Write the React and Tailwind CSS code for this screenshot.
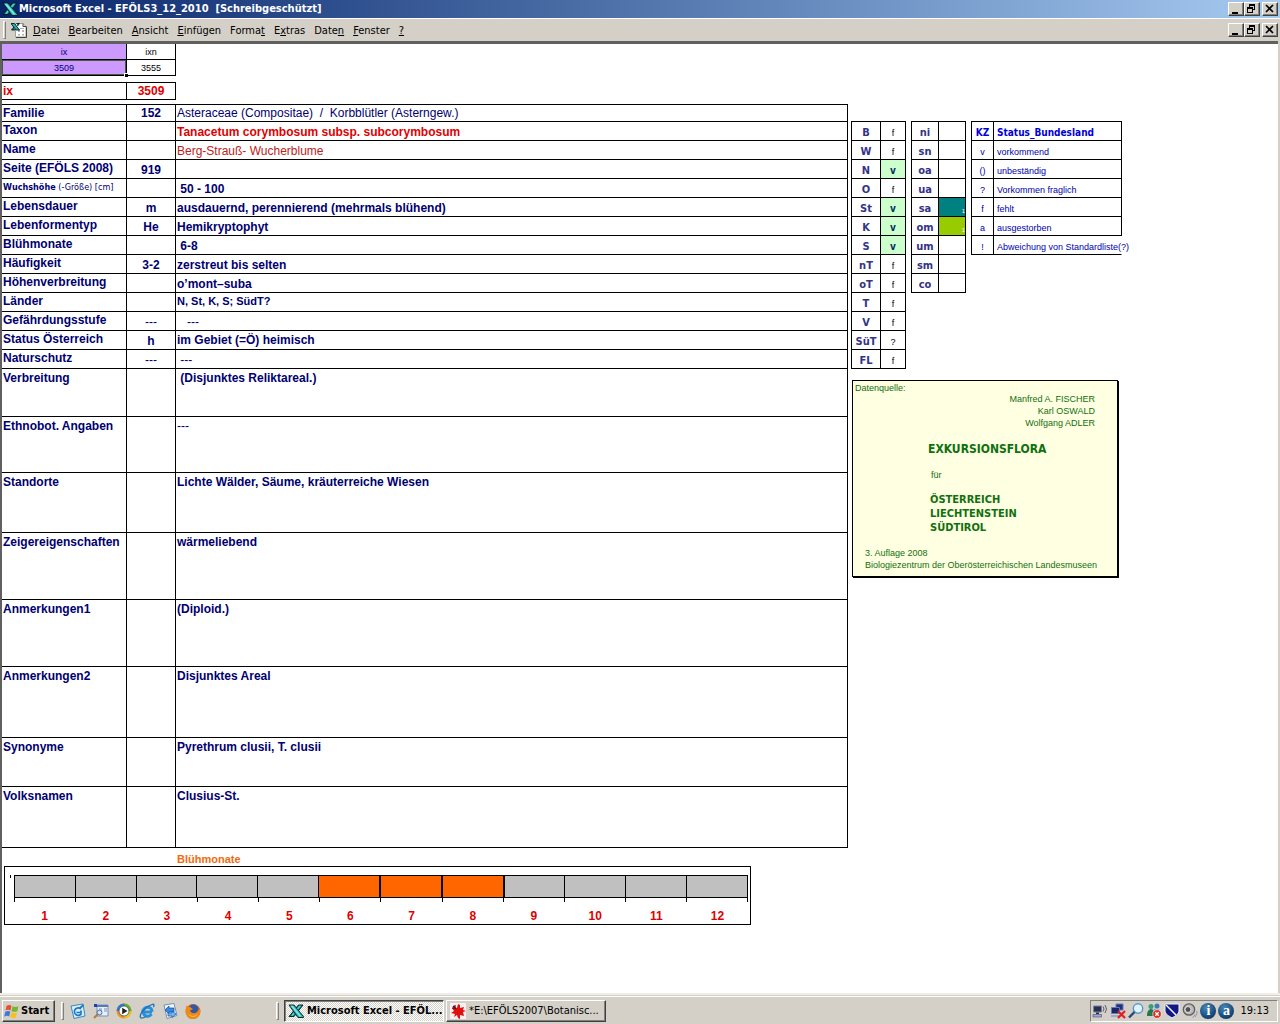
import { useState } from 'react';
import clsx from 'clsx';

const rows = [
  { label: 'Familie', code: '152', value: 'Asteraceae (Compositae)  /  Korbblütler (Asterngew.)', size: 'h-[17px]', text: 'font-normal' },
  { label: 'Taxon', value: 'Tanacetum corymbosum subsp. subcorymbosum', text: 'text-[#e00000]' },
  { label: 'Name', value: 'Berg-Strauß- Wucherblume', text: 'font-normal text-[#c02020]' },
  { label: 'Seite (EFÖLS 2008)', code: '919', value: '' },
  { label: 'Wuchshöhe', unit: '(-Größe) [cm]', value: ' 50 - 100' },
  { label: 'Lebensdauer', code: 'm', value: 'ausdauernd, perennierend (mehrmals blühend)' },
  { label: 'Lebenformentyp', code: 'He', value: 'Hemikryptophyt' },
  { label: 'Blühmonate', value: ' 6-8' },
  { label: 'Häufigkeit', code: '3-2', value: 'zerstreut bis selten' },
  { label: 'Höhenverbreitung', value: 'o’mont–suba' },
  { label: 'Länder', value: 'N, St, K, S; SüdT?', text: 'align-top text-[11px]' },
  { label: 'Gefährdungsstufe', code: '---', value: '   ---', text: 'font-normal' },
  { label: 'Status Österreich', code: 'h', value: 'im Gebiet (=Ö) heimisch', text: 'align-middle' },
  { label: 'Naturschutz', code: '---', value: ' ---', text: 'font-normal' },
  { label: 'Verbreitung', value: ' (Disjunktes Reliktareal.)', size: 'h-[48px]', tall: true },
  { label: 'Ethnobot. Angaben', value: '---', size: 'h-[56px]', tall: true, text: 'font-normal' },
  { label: 'Standorte', value: 'Lichte Wälder, Säume, kräuterreiche Wiesen', size: 'h-[60px]', tall: true },
  { label: 'Zeigereigenschaften', value: 'wärmeliebend', size: 'h-[67px]', tall: true },
  { label: 'Anmerkungen1', value: '(Diploid.)', size: 'h-[67px]', tall: true },
  { label: 'Anmerkungen2', value: 'Disjunktes Areal', size: 'h-[71px]', tall: true },
  { label: 'Synonyme', value: 'Pyrethrum clusii, T. clusii', size: 'h-[49px]', tall: true },
  { label: 'Volksnamen', value: 'Clusius-St.', size: 'h-[61px]', tall: true },
];

const laender = [
  ['B', 'f'], ['W', 'f'], ['N', 'v'], ['O', 'f'], ['St', 'v'], ['K', 'v'], ['S', 'v'],
  ['nT', 'f'], ['oT', 'f'], ['T', 'f'], ['V', 'f'], ['SüT', '?'], ['FL', 'f'],
];

const stufen = [
  ['ni', ''], ['sn', ''], ['oa', ''], ['ua', ''], ['sa', 'bg-[#008080]'],
  ['om', 'bg-[#99cc00]'], ['um', ''], ['sm', ''], ['co', ''],
];

const status = [
  ['v', 'vorkommend'],
  ['()', 'unbeständig'],
  ['?', 'Vorkommen fraglich'],
  ['f', 'fehlt'],
  ['a', 'ausgestorben'],
  ['!', 'Abweichung von Standardliste(?)'],
];

const menus = [
  ['', 'D', 'atei'], ['', 'B', 'earbeiten'], ['', 'A', 'nsicht'], ['', 'E', 'infügen'], ['Forma', 't', ''],
  ['E', 'x', 'tras'], ['Date', 'n', ''], ['', 'F', 'enster'], ['', '?', ''],
];

const months = [1, 2, 3, 4, 5, 6, 7, 8, 9, 10, 11, 12];

const raised = 'bg-[#d4d0c8] border border-t-white border-l-white border-r-[#404040] border-b-[#404040] shadow-[inset_-1px_-1px_0_#808080]';
const cell = 'border-r border-b border-black p-0 leading-4';
const smallCell = 'border-r border-b border-black p-0 leading-[14px]';
const grid = 'table-fixed border-separate border-spacing-0 border-t border-l border-black';
const tahoma = "font-['DejaVu_Sans_Condensed','DejaVu_Sans',sans-serif]";

const ExcelIcon = ({ className }) => (
  <svg viewBox="0 0 16 16" className={className} aria-hidden="true">
    <path d="M10.500 2h4.500L6 13.500H1z" fill="#107878" stroke="#001818" strokeWidth=".9" />
    <path d="M1 2h5l9.500 11.500v1H10z" fill="#28b0b0" stroke="#001818" strokeWidth=".9" />
    <path d="M2.500 2.800h2.300l8.700 10.700h-2z" fill="#80e8e8" />
    <path d="M11.200 2.800h2L10 6.500 9 5.600zM5.500 9.500l1 1.200-1.500 2H3z" fill="#58d0d0" />
  </svg>
);

const SheetIcon = () => (
  <svg viewBox="0 0 16 16" className="h-4 w-4" aria-hidden="true">
    <path d="M4.500 1.500h7.500l3 3v10.500H4.500z" fill="#fff" stroke="#a0a0a0" />
    <path d="M12 1.500v3h3M15.500 4.500v11H5" fill="none" stroke="#404040" />
    <path d="M7 8h2v2H7zM11 8h2v2h-2zM7 12h2v1.500H7zM11 12h2v1.500h-2zM9 6h4v1H9z" fill="#b0b0b0" />
    <path d="M0 1.500h3.500l5 6.500H5z" fill="#28b0b0" stroke="#001818" strokeWidth=".9" />
    <path d="M5.500 1.500h3l-2 2.500M3 5L.5 8H4" fill="#107878" stroke="#001818" strokeWidth=".9" />
  </svg>
);

const WindowButtons = () => (
  <div className="flex items-center pr-[2px]">
    <button aria-label="Minimieren" className={clsx(raised, 'h-[14px] w-4')}>
      <svg viewBox="0 0 14 12" className="h-3 w-[14px]"><path d="M3 9h6v2H3z" /></svg>
    </button>
    <button aria-label="Wiederherstellen" className={clsx(raised, 'h-[14px] w-4')}>
      <svg viewBox="0 0 14 12" className="h-3 w-[14px]" fill="none" stroke="#000" shapeRendering="crispEdges">
        <path d="M4.500 4V1.500h5v5H8M4 2h6M2.500 4.500h5v5h-5zM2 5h6" />
      </svg>
    </button>
    <button aria-label="Schließen" className={clsx(raised, 'ml-[2px] h-[14px] w-4')}>
      <svg viewBox="0 0 14 12" className="h-3 w-[14px]"><path d="M3 2l7 7M10 2L3 9" stroke="#000" strokeWidth="1.700" /></svg>
    </button>
  </div>
);

const TitleBar = () => (
  <header className="flex h-[18px] items-center bg-linear-to-r from-[#0a246a] to-[#a6caf0] pl-[2px]">
    <ExcelIcon className="mr-px h-4 w-4" />
    <h1 className="flex-1 whitespace-pre text-[11px] font-bold leading-4 text-white">
      {'Microsoft Excel - EFÖLS3_12_2010  [Schreibgeschützt]'}
    </h1>
    <WindowButtons />
  </header>
);

const MenuBar = () => (
  <div className="flex h-[23px] items-center border-t border-white bg-[#d4d0c8] pl-[3px]">
    <Handle />
    <span className="mr-[6px] ml-[5px]"><SheetIcon /></span>
    <nav className="flex flex-1 gap-[9px] pt-[2px]">
      {menus.map(([before, key, after]) => (
        <button key={before + key + after} className="text-[11px] leading-4">
          {before}<u>{key}</u>{after}
        </button>
      ))}
    </nav>
    <WindowButtons />
  </div>
);

const IndexTables = ({ index }) => (
  <>
    <table className="w-[174px] table-fixed border-separate border-spacing-0 text-center text-[9px]">
      <thead>
        <tr>
          <th className={clsx(cell, 'h-4 w-[125px] bg-[#cc99ff] font-normal text-[#000080]')}><div className="h-[15px]">ix</div></th>
          <th className={clsx(cell, 'h-4 w-[49px] font-normal')}><div className="h-[15px]">ixn</div></th>
        </tr>
      </thead>
      <tbody>
        <tr>
          <td className={clsx(cell, 'relative h-4 bg-[#cc99ff] text-[#000080] shadow-[inset_0_0_0_1px_#4a5a3a]')}>
            <div className="h-[15px]">{index}</div>
            <span className="absolute -right-[2px] -bottom-[2px] h-1 w-1 border-t border-l border-white bg-black" />
          </td>
          <td className={clsx(cell, 'h-4')}><div className="h-[15px]">3555</div></td>
        </tr>
      </tbody>
    </table>
    <table className="mt-[6px] w-[174px] table-fixed border-separate border-spacing-0 border-t border-black text-[12px] font-bold text-[#e00000]">
      <tbody>
        <tr>
          <th scope="row" className={clsx(cell, 'h-[17px] w-[125px] pl-px text-left')}>ix</th>
          <td className={clsx(cell, 'h-[17px] w-[49px] text-center')}>{index}</td>
        </tr>
      </tbody>
    </table>
  </>
);

const SpeciesTable = () => (
  <table className="mt-1 w-full table-fixed border-separate border-spacing-0 border-t border-black text-[12px] font-bold text-[#000070]">
    <colgroup>
      <col className="w-[125px]" />
      <col className="w-[49px]" />
      <col />
    </colgroup>
    <tbody>
      {rows.map((row) => (
        <tr key={row.label}>
          <th scope="row" className={clsx(cell, row.size || 'h-[19px]', 'pl-px text-left align-top whitespace-nowrap', row.tall && 'pt-px', row.unit && [tahoma, 'text-[9px]'])}>
            {row.label}
            {row.unit && <span className="text-[9px] font-normal"> {row.unit}</span>}
          </th>
          <td className={clsx(cell, 'text-center align-bottom', row.code === '---' && 'font-normal')}>{row.code}</td>
          <td className={clsx(cell, 'pl-px whitespace-pre', row.tall ? 'pt-px align-top' : !row.text?.includes('align') && 'align-bottom', row.text)}>
            {row.value}
          </td>
        </tr>
      ))}
    </tbody>
  </table>
);

const MonthChart = () => (
  <figure className="mr-[97px] ml-[2px]">
    <figcaption className="pt-1 pl-[173px] text-[11px] leading-[14px] font-bold text-[#f06a10]">Blühmonate</figcaption>
    <div className="border border-black px-[2px] pt-2">
      <div className="flex">
        <span className="mr-[3px] ml-[3px] h-[3px] w-px bg-black" />
        <div className="flex h-[23px] flex-1 border border-r-0 border-black">
          {months.map((m) => (
            <div
              key={m}
              className={clsx('flex-1 border-black', m > 5 && m < 9 ? 'border-r-2 bg-[#ff6600]' : 'border-r bg-[#c0c0c0]')}
            />
          ))}
        </div>
      </div>
      <div className="ml-[7px] flex h-1 border-r border-black">
        {months.map((m) => <div key={m} className="flex-1 border-l border-black" />)}
      </div>
      <div className="ml-[7px] flex pt-[6px] text-center text-[12px] leading-4 font-bold text-[#e00000]">
        {months.map((m) => <div key={m} className="flex-1">{m}</div>)}
      </div>
    </div>
  </figure>
);

const LaenderTable = () => (
  <table className={clsx(grid, 'w-[55px] text-center')}>
    <tbody>
      {laender.map(([name, state]) => (
        <tr key={name}>
          <th scope="row" className={clsx(smallCell, tahoma, 'h-[19px] w-[29px] align-bottom text-[11px] font-bold text-[#333388]')}>{name}</th>
          <td className={clsx(smallCell, 'w-[25px] align-bottom', state === 'v' ? [tahoma, 'bg-[#ccffcc] text-[10px] font-bold text-[#003060]'] : 'text-[9px]')}>{state}</td>
        </tr>
      ))}
    </tbody>
  </table>
);

const StufenTable = () => (
  <table className={clsx(grid, 'w-[55px] text-center')}>
    <tbody>
      {stufen.map(([name, color]) => (
        <tr key={name}>
          <th scope="row" className={clsx(smallCell, tahoma, 'h-[19px] w-[27px] align-bottom text-[11px] font-bold text-[#333388]')}>{name}</th>
          <td className={clsx(smallCell, 'w-[27px] text-right align-bottom', color)}>
            {color && <span className="block text-[6px] leading-[10px] text-white">1</span>}
          </td>
        </tr>
      ))}
    </tbody>
  </table>
);

const StatusTable = () => (
  <table className={clsx(grid, 'w-[151px] text-[9px] text-[#0000b0]')}>
    <thead>
      <tr className={clsx(tahoma, 'text-[10px] text-[#0000dd]')}>
        <th className={clsx(smallCell, 'h-[19px] w-[22px] align-bottom')}>KZ</th>
        <th className={clsx(smallCell, 'pl-[3px] text-left align-bottom')}>Status_Bundesland</th>
      </tr>
    </thead>
    <tbody>
      {status.map(([key, text]) => (
        <tr key={key}>
          <td className={clsx(smallCell, 'h-[19px] text-center align-bottom')}>{key}</td>
          <td className={clsx(smallCell, 'pl-[3px] align-bottom whitespace-nowrap', key === '!' && 'border-r-transparent')}>{text}</td>
        </tr>
      ))}
    </tbody>
  </table>
);

const SourceBox = () => (
  <section className="mt-[11px] ml-px w-[266px] border border-black bg-[#ffffe1] text-[9px] leading-3 text-[#107010] shadow-[1px_1px_0_#000]">
    <p className="pt-px pl-[2px]">Datenquelle:</p>
    <p className="-mt-px pr-[22px] text-right">Manfred A. FISCHER<br />Karl OSWALD<br />Wolfgang ADLER</p>
    <h2 className={clsx(tahoma, 'pt-3 pl-[75px] text-[12px] leading-4 font-bold')}>EXKURSIONSFLORA</h2>
    <p className="pt-3 pl-[78px]">für</p>
    <p className={clsx(tahoma, 'pt-3 pl-[77px] text-[11px] leading-[14px] font-bold')}>ÖSTERREICH<br />LIECHTENSTEIN<br />SÜDTIROL</p>
    <p className="pt-3 pb-[5px] pl-3">3. Auflage 2008<br />Biologiezentrum der Oberösterreichischen Landesmuseen</p>
  </section>
);

const StartFlag = () => (
  <svg viewBox="0 0 16 16" className="h-4 w-4" aria-hidden="true">
    <path d="M2.500 3c2-1.500 3.500-1.200 5-.3L6.500 7.500C5 6.600 3.500 6.400 1.500 7.500z" fill="#e8502a" />
    <path d="M8.500 3.200c1.800 1 3.600 1 6 0l-1.200 5c-2 .9-4 .9-5.800-.2z" fill="#70b82c" />
    <path d="M1.300 8.700c2-1.100 3.500-1 5-.1L5.200 13.500c-1.500-.9-3-1-5 .2z" fill="#3a78e0" />
    <path d="M7.300 9.200c1.800 1 3.700 1 5.700.2l-1.200 5c-2 .9-3.800.7-5.600-.3z" fill="#f8c020" />
  </svg>
);

const quickIcons = [
  ['Outlook Express', (
    <>
      <path d="M1 3l12-2 2 12-11 2.500z" fill="#d8ecfa" stroke="#3a88c0" />
      <path d="M11 6A3.800 3.800 0 1 0 11.500 10.500M6.500 9.500h4.500V7.500M10 5l3.500-3" fill="none" stroke="#1878c0" strokeWidth="1.700" />
    </>
  )],
  ['Suche', (
    <>
      <path d="M4 2h11v11H4z" fill="#e8f0fa" stroke="#7890b8" />
      <path d="M4 2h11v2H4z" fill="#5878b8" />
      <path d="M6 6h3M11 6h3M6 8h3M11 8h3" stroke="#7090c8" />
      <circle cx="6.500" cy="9.500" r="2.500" fill="#c8e4fa" stroke="#5070a0" />
      <path d="M5 11l-4 4" stroke="#b87838" strokeWidth="2" />
      <path d="M1 1h3v3H1z" fill="#1840c0" />
    </>
  )],
  ['Media Player', (
    <>
      <circle cx="8" cy="8" r="7.500" fill="#f09020" />
      <path d="M8 .5A7.500 7.500 0 0 1 15.500 8H8z" fill="#58b030" />
      <path d="M.5 8A7.500 7.500 0 0 1 8 .5V8z" fill="#3078d0" />
      <path d="M8 15.500A7.500 7.500 0 0 0 15.500 8H8z" fill="#f0c020" />
      <circle cx="8" cy="8" r="5" fill="#fff" stroke="#405060" strokeWidth=".8" />
      <path d="M6.200 4.800v6.400L11.500 8z" fill="#202020" />
    </>
  )],
  ['Internet Explorer', (
    <>
      <path d="M13 9H4.500c0 5 5.500 5.500 8 2.200M3.800 9c0-6 9.500-6.500 9.200-.3" fill="none" stroke="#2890d8" strokeWidth="3" />
      <path d="M1.500 14.500C0 11 7 3 14.500 1.200c1 1 .5 2-.2 3M1.500 14.500c1 1.200 3 .3 5-.8" fill="none" stroke="#2070b8" strokeWidth="1.300" />
    </>
  )],
  ['Synchronisieren', (
    <>
      <path d="M2 2l10-1.500 3 12L5 15.500z" fill="#f0f6fc" stroke="#7090b8" />
      <path d="M3 7l4-4v2h5v4H7v2z" fill="#3888e0" stroke="#185098" strokeWidth=".7" />
      <path d="M14 11l-4 3.500V13H6v-3h4V8z" fill="#70b8f0" stroke="#185098" strokeWidth=".7" />
    </>
  )],
  ['Firefox', (
    <>
      <circle cx="8" cy="8.500" r="7.500" fill="#e06810" />
      <circle cx="8.500" cy="6.500" r="5" fill="#3058a8" />
      <path d="M1.500 2.500c1 1.500 2 1.500 3.500 1.500l3 2-3 1.500c1 3 4.500 3.500 7 1.500l2.500-3.500c2 5-1 10.500-7 10.500S-.5 10 1.500 2.500z" fill="#f08818" />
      <path d="M3 10c2 3.500 6.500 4 9.500 1-1 3.500-7.500 4.500-9.500-1z" fill="#f8c840" />
    </>
  )],
];

const trayIcons = [
  ['Netzwerk', (
    <>
      <path d="M1.500 3h8v6h-8z" fill="#283050" stroke="#7880a8" />
      <path d="M4 9.500h3V11H4z" fill="#283050" />
      <path d="M1 11.500h8.500V14H1z" fill="#a0a8d0" stroke="#404878" strokeWidth=".6" />
      <path d="M11 3.500q2 2.500 0 5M13 2q3 4 0 8" fill="none" stroke="#606068" />
    </>
  )],
  ['LAN getrennt', (
    <>
      <path d="M6 1h7v6H6z" fill="#203080" stroke="#6878b8" />
      <path d="M1.500 4.500h8v6h-8z" fill="#182868" stroke="#6878b8" />
      <path d="M1 12h9v2H1z" fill="#a0a8c8" />
      <path d="M8 8l7 7M15 8l-7 7" stroke="#e02020" strokeWidth="2.200" />
    </>
  )],
  ['Lupe', (
    <>
      <circle cx="10" cy="5.500" r="4.700" fill="#e0f4ff" stroke="#5098d0" strokeWidth="1.400" />
      <path d="M6.500 9L1 14.500" stroke="#284878" strokeWidth="2.400" />
    </>
  )],
  ['Messenger', (
    <>
      <circle cx="5" cy="3.500" r="2.500" fill="#38a078" />
      <path d="M1 13c0-5 2-7 4-7s4.500 3 4.500 7z" fill="#207850" />
      <circle cx="11" cy="3" r="2.500" fill="#4078b8" />
      <path d="M7 9c0-3 2-3.500 4-3.500S14.500 7 14.500 10z" fill="#68a8d0" />
      <circle cx="11" cy="11" r="4.300" fill="#d83020" stroke="#fff" strokeWidth=".6" />
      <path d="M9.300 9.300l3.400 3.400M12.700 9.300l-3.400 3.400" stroke="#fff" strokeWidth="1.300" />
    </>
  )],
  ['Virenschutz', (
    <>
      <path d="M1 1h14v7c0 3-4 5-7 7-3-2-7-4-7-7z" fill="#101888" stroke="#f0f0f8" />
      <path d="M2 2l10 10" stroke="#fff" strokeWidth="1.400" />
    </>
  )],
  ['Lautstärke', (
    <>
      <circle cx="7" cy="6.500" r="5.700" fill="#b8b8b8" stroke="#606060" strokeWidth="1.300" />
      <circle cx="6" cy="6.500" r="3" fill="#505050" stroke="#e8e8e8" />
      <path d="M13 14q2.500-2.500 2-6M10.500 14.500q2-1 2.500-3" fill="none" stroke="#9090c0" />
    </>
  )],
];

const BlueBall = ({ letter }) => (
  <span className="flex h-4 w-4 items-center justify-center rounded-full bg-[radial-gradient(circle_at_40%_30%,#4a88b8,#0c3c6c_75%)] font-['Liberation_Serif',serif] text-[14px] leading-none font-bold text-white">
    {letter}
  </span>
);

const Splat = () => (
  <svg viewBox="0 0 16 16" className="h-4 w-4 shrink-0" aria-hidden="true">
    <path d="M0 0h16v16H0z" fill="#f8f0f0" />
    <path d="M5 4l2 1 1-4 2 1v3l4-1-1 3 3 1-3 1 1 4-4-1v4l-2-1-1-3-3 2 1-3-4-1 3-2-2-3h3z" fill="#e01010" />
    <path d="M3 3l3 3M5 2v3M2 5h3" stroke="#600808" strokeWidth="1.200" />
  </svg>
);

const Handle = ({ className }) => (
  <span className={clsx('h-[18px] w-[3px] border border-t-white border-l-white border-r-[#808080] border-b-[#808080]', className)} />
);

const Taskbar = () => {
  const [active, setActive] = useState(0);
  const tasks = [
    { text: 'Microsoft Excel - EFÖL...', icon: <ExcelIcon className="h-4 w-4 shrink-0" /> },
    { text: '*E:\\EFÖLS2007\\Botanisc...', icon: <Splat /> },
  ];

  return (
    <footer className="flex h-7 items-center border-t border-white bg-[#d4d0c8] px-[2px]">
      <button className={clsx(raised, 'flex h-[22px] w-[53px] items-center gap-px pl-px text-[11px] font-bold')}>
        <StartFlag />
        <span className="pt-px">Start</span>
      </button>
      <Handle className="ml-[6px]" />
      <div className="ml-[6px] flex gap-[7px]">
        {quickIcons.map(([name, drawing]) => (
          <button key={name} aria-label={name}>
            <svg viewBox="0 0 16 16" className="h-4 w-4">{drawing}</svg>
          </button>
        ))}
      </div>
      <Handle className="ml-[75px]" />
      <div className="ml-[5px] flex flex-1 gap-[2px]">
        {tasks.map((task, i) => (
          <button
            key={task.text}
            onClick={() => setActive(i)}
            className={clsx(
              'flex h-[22px] w-40 items-center gap-[3px] overflow-hidden pl-[3px] text-[11px] whitespace-nowrap',
              i === active
                ? 'border border-t-[#404040] border-r-white border-b-white border-l-[#404040] bg-[repeating-conic-gradient(#fff_0_25%,#d4d0c8_0_50%)] bg-size-[2px_2px] font-bold shadow-[inset_1px_1px_0_#808080]'
                : raised
            )}
          >
            {task.icon}
            <span className="pt-[2px]">{task.text}</span>
          </button>
        ))}
      </div>
      <div className="flex h-[22px] items-center gap-[2px] border border-t-[#808080] border-r-white border-b-white border-l-[#808080] pr-2 pl-px">
        {trayIcons.map(([name, drawing]) => (
          <svg key={name} viewBox="0 0 16 16" className="h-4 w-4" role="img" aria-label={name}>{drawing}</svg>
        ))}
        <BlueBall letter="i" />
        <BlueBall letter="a" />
        <time className="pt-[2px] pl-1 text-[11px]">19:13</time>
      </div>
    </footer>
  );
};

const App = () => (
  <div className="flex min-h-screen flex-col bg-[#d4d0c8] font-['DejaVu_Sans_Condensed','DejaVu_Sans',sans-serif] text-black">
    <TitleBar />
    <MenuBar />
    <main className="mr-[2px] flex flex-1 items-start border-t-[3px] border-l-2 border-[#606060] bg-white font-['Liberation_Sans',Arial,sans-serif]">
      <div className="min-w-0 flex-1">
        <IndexTables index="3509" />
        <SpeciesTable />
        <MonthChart />
      </div>
      <aside className="w-[430px] shrink-0 pt-[77px] pl-[3px]">
        <div className="flex items-start gap-[5px]">
          <LaenderTable />
          <StufenTable />
          <StatusTable />
        </div>
        <SourceBox />
      </aside>
    </main>
    <div className="h-[3px] border-b border-[#d4d0c8] bg-[#f0eee8]" />
    <Taskbar />
  </div>
);

export default App;
